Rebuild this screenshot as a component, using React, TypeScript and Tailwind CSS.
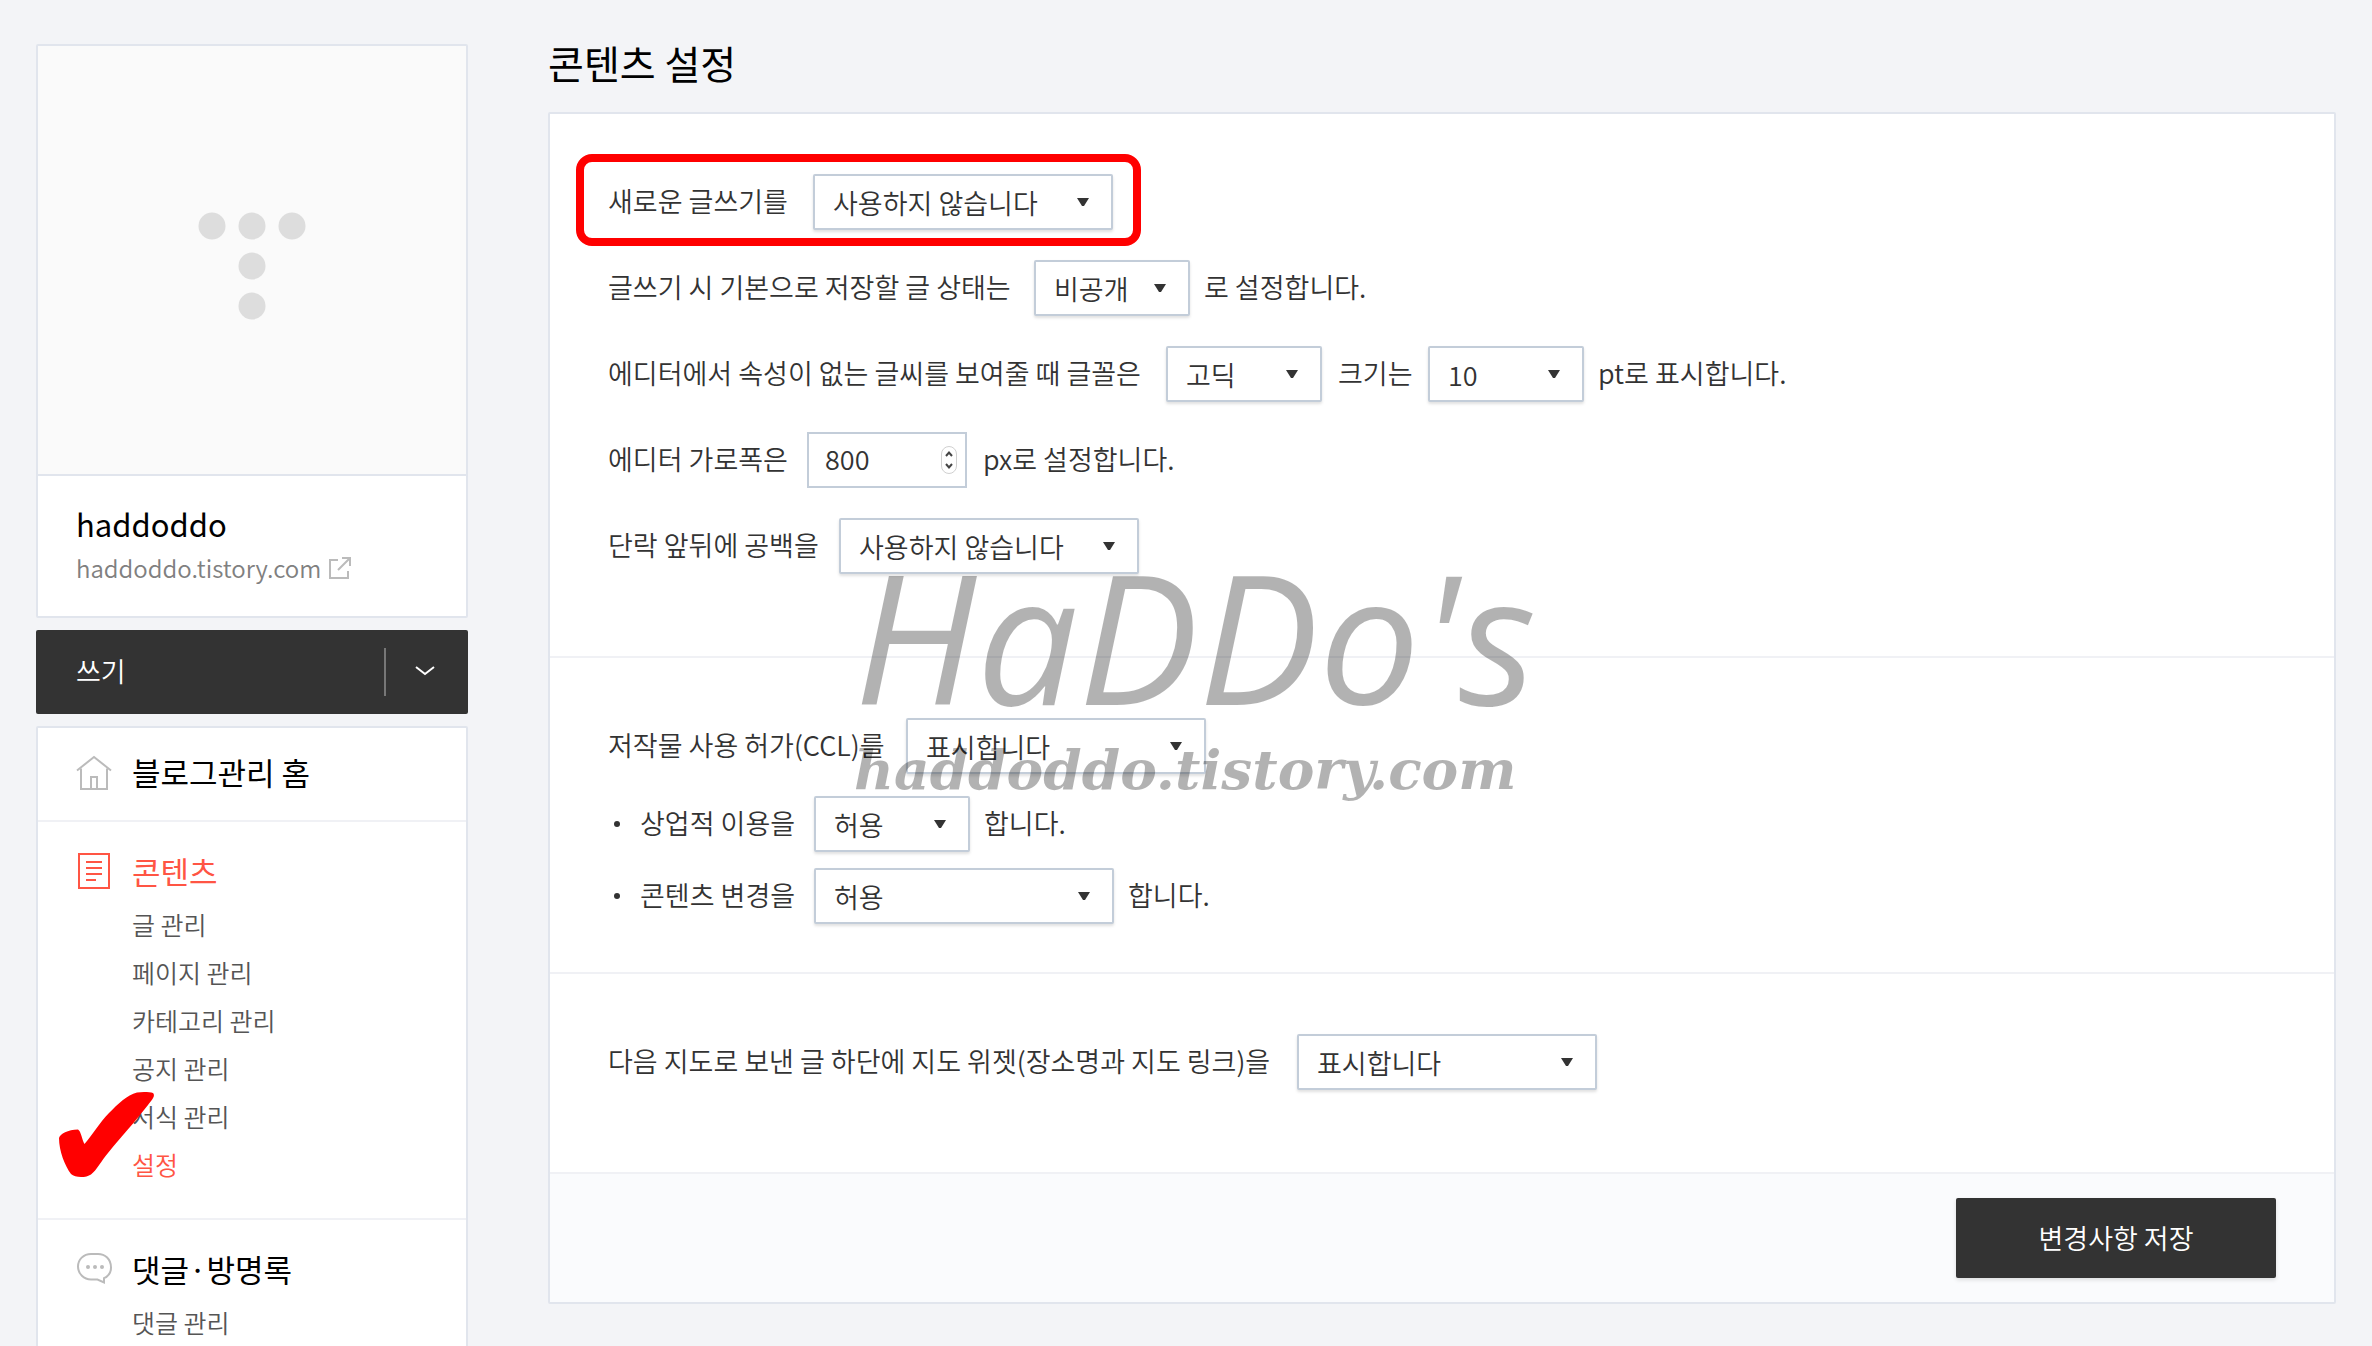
import { useState } from "react";
import type { ReactNode } from "react";

interface SelectFieldProps {
    id: string;
    label: string;
    labelWidth: string;
    options: string[];
    wide?: boolean;
    after?: string;
}

interface MenuSection {
    title: string;
    icon: ReactNode;
    active?: boolean;
    items: string[];
}

function HomeIcon() {
    return (
        <svg className="h-9 w-9" viewBox="0 0 36 36" fill="none" stroke="#bbb" strokeWidth="2">
            <path d="M1 16.5 L18 3 L35 16.5" />
            <path d="M5 14.5 V35 H31 V14.5" />
            <path d="M15 35 V23 H21 V35" />
        </svg>
    );
}

function ContentIcon() {
    return (
        <svg className="h-9 w-9" viewBox="0 0 36 36" fill="none" stroke="#ff5544" strokeWidth="2">
            <rect x="3" y="1" width="30" height="34" />
            <path d="M10 9 H26 M10 15 H26 M10 21 H26 M10 27 H20" />
        </svg>
    );
}

function CommentIcon() {
    return (
        <svg className="h-9 w-9" viewBox="0 0 36 36" fill="none" stroke="#bbb" strokeWidth="2">
            <path d="M28 31.5 V27.2 C32 25.5 35 21.5 35 16.5 C35 8 29 3 22 3 H15 C7.5 3 2 8.5 2 15.5 C2 23 8 28.5 15 28.5 H21.5 Z" />
            <g fill="#bbb" stroke="none">
                <circle cx="12" cy="16" r="2" />
                <circle cx="19" cy="16" r="2" />
                <circle cx="26" cy="16" r="2" />
            </g>
        </svg>
    );
}

const MENU: MenuSection[] = [
    { title: "블로그관리 홈", icon: <HomeIcon />, items: [] },
    {
        title: "콘텐츠",
        icon: <ContentIcon />,
        active: true,
        items: ["글 관리", "페이지 관리", "카테고리 관리", "공지 관리", "서식 관리", "설정"],
    },
    { title: "댓글·방명록", icon: <CommentIcon />, items: ["댓글 관리"] },
];

function CheckMark() {
    return (
        <svg className="pointer-events-none absolute -top-[49px] -left-[73px] h-[88px] w-24" viewBox="0 0 96 88">
            <path
                fill="#ff0000"
                d="M0 47 C1 43 9 38.500 19 38.500 C22 40 23 49 25.500 53 C34 43 41 31 50 22 C59 13 68 4 78 1.500 C84 0.500 91 1 94 2 C97 5 92 10 89 14 C75 32 62 46 49 62 C43 69 37 80 32 83.500 C27 87 16 87 12 83 C6 75 0 60 0 47 Z"
            />
        </svg>
    );
}

function SelectField({ id, label, labelWidth, options, wide, after }: SelectFieldProps) {
    const [value, setValue] = useState(options[0]);

    return (
        <>
            <label htmlFor={id} className={labelWidth}>
                {label}
            </label>
            <span className="relative">
                <select
                    id={id}
                    value={value}
                    onChange={(e) => setValue(e.target.value)}
                    className={`${wide ? "w-[300px]" : "w-[156px]"} block h-14 appearance-none rounded-xs border-2 border-[#c3cdd9] bg-white pt-0.5 pl-[18px] leading-10 shadow-[0_2px_3px_rgba(0,0,0,0.12)]`}
                >
                    {options.map((option) => (
                        <option key={option}>{option}</option>
                    ))}
                </select>
                <svg className="pointer-events-none absolute top-6 right-6 h-2 w-3" viewBox="0 0 12 8">
                    <path d="M0 0 H12 L7 8 H5 Z" fill="#333" />
                </svg>
            </span>
            {after && <span className="-ml-0.5">{after}</span>}
        </>
    );
}

function Sidebar() {
    return (
        <aside className="w-[432px] shrink-0">
            <section className="rounded-xs border-2 border-[#e1e5ed] bg-white">
                <div className="flex h-[430px] items-center justify-center border-b-2 border-[#e1e5ed] bg-[#fafafa] pt-3">
                    <svg className="h-[108px] w-[108px]" viewBox="0 0 108 108" fill="#dddddd">
                        <circle cx="14" cy="14" r="13.500" />
                        <circle cx="54" cy="14" r="13.500" />
                        <circle cx="94" cy="14" r="13.500" />
                        <circle cx="54" cy="54" r="13.500" />
                        <circle cx="54" cy="94" r="13.500" />
                    </svg>
                </div>
                <div className="px-[38px] pt-[26px] pb-7">
                    <strong className="mb-0.5 block text-[31px] leading-[44px] font-normal text-black">haddoddo</strong>
                    <a href="#blog" className="flex items-center gap-2 text-[24px] leading-10 font-[350] text-[#808080]">
                        haddoddo.tistory.com
                        <svg className="h-[22px] w-[22px]" viewBox="0 0 22 22" fill="none" stroke="#bbb" strokeWidth="2">
                            <path d="M9 3 H1 V21 H19 V14" />
                            <path d="M13 1 H21 V9 M21 1 L9 13" />
                        </svg>
                    </a>
                </div>
            </section>

            <div className="mt-3 flex h-[84px] items-center rounded-xs bg-[#333] text-white">
                <button type="button" className="h-full flex-1 pb-0.5 pl-10 text-left text-[27px] font-[350]">
                    쓰기
                </button>
                <button type="button" aria-label="더보기" className="flex h-12 w-[84px] items-center justify-center border-l-2 border-[#777] pr-1">
                    <svg className="h-3 w-5" viewBox="0 0 20 12" fill="none" stroke="#fff" strokeWidth="2">
                        <path d="M1 1 L10 8 L19 1" />
                    </svg>
                </button>
            </div>

            <nav className="mt-3 rounded-xs border-2 border-[#e1e5ed] bg-white">
                {MENU.map((section) => (
                    <div key={section.title} className="border-b-2 border-[#f0f1f5] pl-[38px] last:border-b-0">
                        <a
                            href="#menu"
                            className={`flex items-center gap-5 text-[31px] leading-9 ${section.active ? "text-[#ff5544]" : "text-black"} ${section.items.length ? "pt-[31px] pb-[11px]" : "pt-[26px] pb-[30px]"}`}
                        >
                            {section.icon}
                            {section.title}
                        </a>
                        {section.items.length > 0 && (
                            <ul className="pb-[30px] pl-14">
                                {section.items.map((item) => (
                                    <li key={item} className="relative text-[25px] leading-[48px] font-[350]">
                                        <a href="#item" className={item === "설정" ? "text-[#ff5544]" : "text-[#555]"}>
                                            {item}
                                        </a>
                                        {item === "설정" && <CheckMark />}
                                    </li>
                                ))}
                            </ul>
                        )}
                    </div>
                ))}
            </nav>
        </aside>
    );
}

function WidthField() {
    const [width, setWidth] = useState(800);

    return (
        <>
            <label htmlFor="editor-width" className="w-[183px]">
                에디터 가로폭은
            </label>
            <span className="relative">
                <input
                    id="editor-width"
                    type="number"
                    value={width}
                    onChange={(e) => setWidth(Number(e.target.value))}
                    className="block h-14 w-40 appearance-none border-2 border-[#c3cdd9] bg-white pb-1 pl-4 [appearance:textfield]"
                />
                <svg className="pointer-events-none absolute top-3 right-2 h-8 w-5" viewBox="0 0 20 32" fill="none">
                    <rect x="2.500" y="2.500" width="15" height="27" rx="7.500" stroke="#d0d0d0" />
                    <path d="M7 12 L10 8.500 L13 12 M7 20 L10 23.500 L13 20" stroke="#444" strokeWidth="2" />
                </svg>
            </span>
            <span>px로 설정합니다.</span>
        </>
    );
}

function Watermark() {
    return (
        <div className="pointer-events-none absolute top-[424px] left-[304px] whitespace-nowrap text-black/30">
            <p className="font-['Open_Sans'] text-[180px] leading-[196px] font-normal italic">HaDDo's</p>
            <p className="font-['DejaVu_Serif'] text-[55px] leading-[72px] font-bold italic">haddoddo.tistory.com</p>
        </div>
    );
}

export default function App() {
    return (
        <div className="flex h-screen items-start gap-20 overflow-hidden bg-[#f3f4f7] px-9 pt-11 font-['Noto_Sans_CJK_KR','Noto_Sans',sans-serif] text-[#333]">
            <Sidebar />

            <main className="min-w-0 flex-1">
                <h1 className="-mt-2.5 mb-[22px] text-[39px] leading-14 font-normal text-black">콘텐츠 설정</h1>

                <form
                    onSubmit={(e) => e.preventDefault()}
                    className="relative rounded-xs border-2 border-[#e1e5ed] bg-white text-[27px] leading-[54px] font-[350] whitespace-nowrap"
                >
                    {/* 글쓰기 */}
                    <div className="flex flex-col items-start gap-[30px] border-b-2 border-[#f0f1f5] px-[58px] pt-[60px] pb-[82px]">
                        <div className="relative flex gap-4">
                            <SelectField
                                id="new-editor"
                                label="새로운 글쓰기를"
                                labelWidth="w-[189px]"
                                options={["사용하지 않습니다", "사용합니다"]}
                                wide
                            />
                            <span className="pointer-events-none absolute -top-5 -right-7 -bottom-4 -left-8 rounded-2xl border-8 border-[#ff0000]" />
                        </div>
                        <div className="flex gap-4">
                            <SelectField
                                id="post-status"
                                label="글쓰기 시 기본으로 저장할 글 상태는"
                                labelWidth="w-[410px]"
                                options={["비공개", "공개"]}
                                after="로 설정합니다."
                            />
                        </div>
                        <div className="flex gap-4">
                            <SelectField
                                id="font-family"
                                label="에디터에서 속성이 없는 글씨를 보여줄 때 글꼴은"
                                labelWidth="w-[542px]"
                                options={["고딕", "명조"]}
                            />
                            <SelectField
                                id="font-size"
                                label="크기는"
                                labelWidth="w-[74px]"
                                options={["10", "11", "12"]}
                                after="pt로 표시합니다."
                            />
                        </div>
                        <div className="flex gap-4">
                            <WidthField />
                        </div>
                        <div className="flex gap-4">
                            <SelectField
                                id="paragraph-gap"
                                label="단락 앞뒤에 공백을"
                                labelWidth="w-[215px]"
                                options={["사용하지 않습니다", "사용합니다"]}
                                wide
                            />
                        </div>
                    </div>

                    {/* CCL */}
                    <div className="border-b-2 border-[#f0f1f5] px-[58px] pt-[60px] pb-12">
                        <div className="flex gap-4">
                            <SelectField
                                id="ccl"
                                label="저작물 사용 허가(CCL)를"
                                labelWidth="w-[282px]"
                                options={["표시합니다", "표시하지 않습니다"]}
                                wide
                            />
                        </div>
                        <ul className="mt-[22px] flex flex-col gap-4 pl-1.5">
                            <li className="flex gap-4">
                                <span className="mr-1 h-1.5 w-1.5 self-center rounded-full bg-[#333]" />
                                <SelectField
                                    id="ccl-commercial"
                                    label="상업적 이용을"
                                    labelWidth="w-[158px]"
                                    options={["허용", "금지"]}
                                    after="합니다."
                                />
                            </li>
                            <li className="flex gap-4">
                                <span className="mr-1 h-1.5 w-1.5 self-center rounded-full bg-[#333]" />
                                <SelectField
                                    id="ccl-modify"
                                    label="콘텐츠 변경을"
                                    labelWidth="w-[158px]"
                                    options={["허용", "금지"]}
                                    wide
                                    after="합니다."
                                />
                            </li>
                        </ul>
                    </div>

                    {/* 지도 위젯 */}
                    <div className="flex gap-4 px-[58px] pt-[60px] pb-[82px]">
                        <SelectField
                            id="map-widget"
                            label="다음 지도로 보낸 글 하단에 지도 위젯(장소명과 지도 링크)을"
                            labelWidth="w-[673px]"
                            options={["표시합니다", "표시하지 않습니다"]}
                            wide
                        />
                    </div>

                    <div className="flex justify-end border-t-2 border-[#f0f1f5] bg-[#fafbfd] px-[58px] py-6">
                        <button type="submit" className="h-20 w-80 rounded-xs bg-[#333] text-white shadow-[0_2px_4px_rgba(0,0,0,0.12)]">
                            변경사항 저장
                        </button>
                    </div>

                    <Watermark />
                </form>
            </main>
        </div>
    );
}
